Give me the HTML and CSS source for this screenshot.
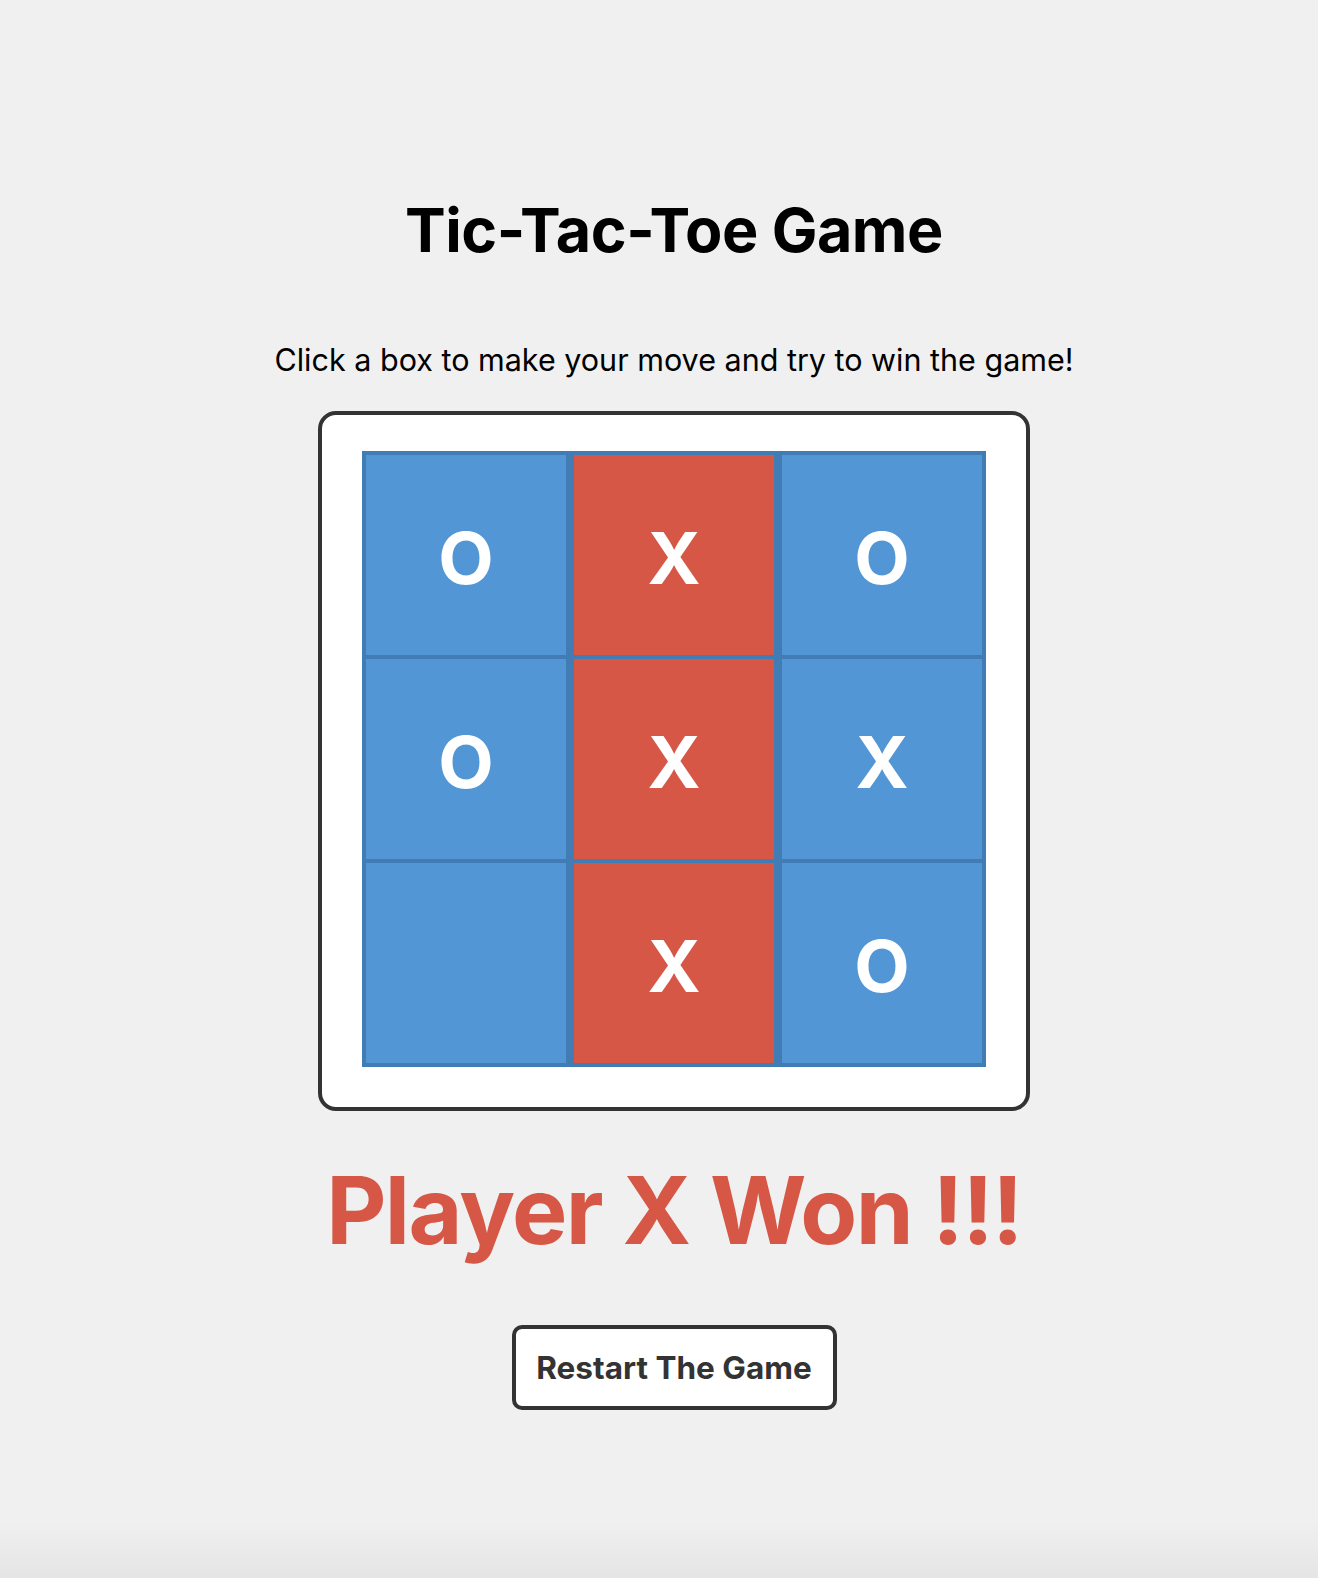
FILE: index.html
```html
<!DOCTYPE html>
<html lang="en">
<head>
<meta charset="utf-8">
<title>Tic-Tac-Toe Game</title>
<link rel="stylesheet" href="styles.css">
</head>
<body>
<main class="page">
  <h1 class="title">Tic-Tac-Toe Game</h1>
  <p class="subtitle">Click a box to make your move and try to win the game!</p>
  <div class="board">
    <div class="grid">
      <div class="cell cell-o">O</div>
      <div class="cell cell-x">X</div>
      <div class="cell cell-o">O</div>
      <div class="cell cell-o">O</div>
      <div class="cell cell-x">X</div>
      <div class="cell cell-o">X</div>
      <div class="cell cell-o"></div>
      <div class="cell cell-x">X</div>
      <div class="cell cell-o">O</div>
    </div>
  </div>
  <p class="result">Player X Won !!!</p>
  <button class="restart" type="button">Restart The Game</button>
</main>
</body>
</html>
```

FILE: styles.css
```css
html, body {
  margin: 0;
  padding: 0;
}

body {
  min-height: 1578px;
  background: linear-gradient(to bottom, #f0f0f0 0, #f0f0f0 1520px, #e5e5e5 1578px);
  font-family: Inter, "Noto Sans", "Liberation Sans", sans-serif;
}

.page {
  display: flex;
  flex-direction: column;
  align-items: center;
  padding: 190px 0 0 30px;
}

.title {
  margin: 0;
  font-size: 61px;
  line-height: 80px;
  font-weight: 700;
  color: #000;
  letter-spacing: -0.5px;
}

.subtitle {
  margin: 72px 0 0;
  font-size: 30.5px;
  line-height: 36px;
  font-weight: 400;
  color: #000;
}

.board {
  margin: 33px 0 0;
  background: #fff;
  border: 4px solid #333;
  border-radius: 18px;
  padding: 36px 40px 40px;
}

.grid {
  display: grid;
  grid-template-columns: repeat(3, 200px);
  grid-auto-rows: 200px;
  gap: 4px 8px;
  padding: 4px;
  background: #417cb5;
}

.cell {
  display: flex;
  align-items: center;
  justify-content: center;
  padding-top: 4px;
  box-sizing: border-box;
  color: #fff;
  font-size: 72px;
  font-weight: 700;
}

.cell-o {
  background: #5296d5;
}

.cell-x {
  background: #d75746;
}

.result {
  margin: 44px 0 0;
  font-size: 93px;
  line-height: 110px;
  font-weight: 700;
  color: #d75746;
  letter-spacing: -1.6px;
}

.restart {
  margin-top: 60px;
  width: 325px;
  height: 85px;
  background: #fff;
  border: 4px solid #333;
  border-radius: 10px;
  color: #333;
  font-family: Inter, "Noto Sans", "Liberation Sans", sans-serif;
  font-size: 31.5px;
  font-weight: 700;
  padding: 0;
}
```
